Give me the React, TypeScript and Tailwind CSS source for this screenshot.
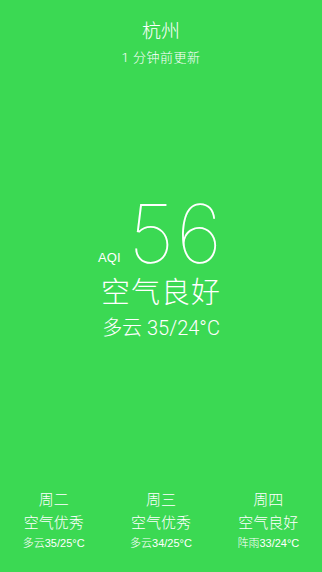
export default function App() {
  const forecast = [
    { day: "周二", aqi: "空气优秀", weather: "多云35/25°C" },
    { day: "周三", aqi: "空气优秀", weather: "多云34/25°C" },
    { day: "周四", aqi: "空气良好", weather: "阵雨33/24°C" },
  ];

  return (
    <div
      className="w-[322px] h-[572px] bg-[#3bd953] text-white font-light flex flex-col items-center overflow-hidden"
      style={{ fontFamily: 'Roboto, "Noto Sans CJK SC", sans-serif' }}
    >
      {/* Header */}
      <div className="flex flex-col items-center pt-[20px]">
        <h1 className="text-[19px] leading-[24px]">杭州</h1>
        <p className="text-[13px] leading-[16px] mt-[6px] tracking-[0.5px]">1 分钟前更新</p>
      </div>

      {/* Main AQI */}
      <div className="flex flex-col items-center mt-[135px]">
        <div className="flex items-end">
          <span
            className="text-[13px] font-normal leading-none mb-[3px] mr-[8px]"
            style={{ fontFamily: '"Liberation Sans", sans-serif' }}
          >
            AQI
          </span>
          <span
            className="text-[81px] leading-[66px] font-thin tracking-[2px]"
            style={{ fontFamily: "Inter, Roboto, sans-serif" }}
          >
            56
          </span>
        </div>
        <p className="text-[29px] leading-[34px] mt-[9px] tracking-[1px]">空气良好</p>
        <p className="text-[20px] leading-[24px] mt-[6px]">多云 35/24°C</p>
      </div>

      {/* Forecast */}
      <div className="grid grid-cols-3 w-full mt-auto mb-[22px]">
        {forecast.map((f) => (
          <div key={f.day} className="flex flex-col items-center">
            <span className="text-[15px] leading-[18px]">{f.day}</span>
            <span className="text-[15px] leading-[18px] mt-[5px]">{f.aqi}</span>
            <span
              className="text-[11px] leading-[14px] mt-[4px]"
              style={{ fontFamily: '"Liberation Sans", "Noto Sans CJK SC", sans-serif' }}
            >
              {f.weather}
            </span>
          </div>
        ))}
      </div>
    </div>
  );
}
